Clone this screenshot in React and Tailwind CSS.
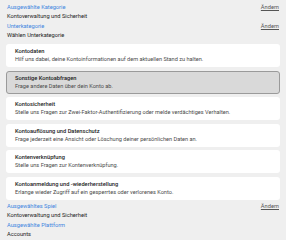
import { useState } from 'react';

const options = [
  { title: 'Kontodaten', desc: 'Hilf uns dabei, deine Kontoinformationen auf dem aktuellen Stand zu halten.' },
  { title: 'Sonstige Kontoabfragen', desc: 'Frage andere Daten über dein Konto ab.' },
  { title: 'Kontosicherheit', desc: 'Stelle uns Fragen zur Zwei-Faktor-Authentifizierung oder melde verdächtiges Verhalten.' },
  { title: 'Kontoauflösung und Datenschutz', desc: 'Frage jederzeit eine Ansicht oder Löschung deiner persönlichen Daten an.' },
  { title: 'Kontenverknüpfung', desc: 'Stelle uns Fragen zur Kontenverknüpfung.' },
  { title: 'Kontoanmeldung und -wiederherstellung', desc: 'Erlange wieder Zugriff auf ein gesperrtes oder verlorenes Konto.' },
];

function Summary({ label, value, editable }) {
  return (
    <div className="flex items-start justify-between">
      <div className="flex flex-col">
        <span className="text-[5.7px] leading-[10px] text-[#3d85e0]">{label}</span>
        <span className="text-[5.7px] leading-[9px] text-[#1c1c1c]">{value}</span>
      </div>
      {editable && (
        <button className="text-[5.7px] leading-[10px] text-[#555] underline mr-[1px]">Ändern</button>
      )}
    </div>
  );
}

export default function App() {
  const [selected, setSelected] = useState(1);

  return (
    <div className="w-[286px] h-[240px] bg-[#efefef] px-[6px] pt-[2px] font-['Roboto',sans-serif] overflow-hidden">
      <div className="pl-[1px]">
        <Summary label="Ausgewählte Kategorie" value="Kontoverwaltung und Sicherheit" editable />
        <Summary label="Unterkategorie" value="Wählen Unterkategorie" editable />
      </div>

      <div className="flex flex-col gap-[3.5px] mt-[4px]">
        {options.map((opt, i) => (
          <div
            key={opt.title}
            onClick={() => setSelected(i)}
            className={`h-[23px] rounded-[3px] cursor-pointer ${
              i === selected ? 'bg-[#d9d9d9] border border-[#9a9a9a] pt-[2px] px-[8px]' : 'bg-white pt-[3px] px-[9px]'
            }`}
          >
            <p className="text-[5.7px] leading-[8px] font-medium text-[#1c1c1c]">{opt.title}</p>
            <p className="text-[5.6px] leading-[9px] text-[#4a4a4a]">{opt.desc}</p>
          </div>
        ))}
      </div>

      <div className="pl-[1px] mt-[1px]">
        <Summary label="Ausgewähltes Spiel" value="Kontoverwaltung und Sicherheit" editable />
        <Summary label="Ausgewählte Plattform" value="Accounts" />
      </div>
    </div>
  );
}
